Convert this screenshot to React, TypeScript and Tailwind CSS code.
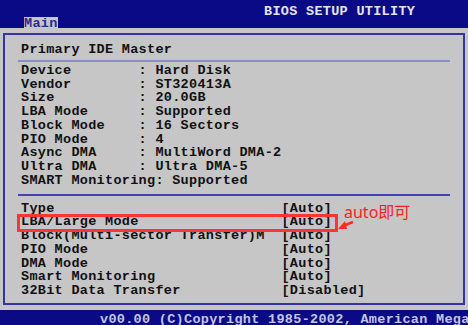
const infoRows: [string, string][] = [
  ["Device", "Hard Disk"],
  ["Vendor", "ST320413A"],
  ["Size", "20.0GB"],
  ["LBA Mode", "Supported"],
  ["Block Mode", "16 Sectors"],
  ["PIO Mode", "4"],
  ["Async DMA", "MultiWord DMA-2"],
  ["Ultra DMA", "Ultra DMA-5"],
];

const options: [string, string][] = [
  ["Type", "[Auto]"],
  ["LBA/Large Mode", "[Auto]"],
  ["Block(Multi-sector Transfer)M", "[Auto]"],
  ["PIO Mode", "[Auto]"],
  ["DMA Mode", "[Auto]"],
  ["Smart Monitoring", "[Auto]"],
  ["32Bit Data Transfer", "[Disabled]"],
];

const mono =
  "font-['Liberation_Mono',monospace] font-bold text-[13.5px] tracking-[0.3px] leading-[13.75px]";

export default function App() {
  return (
    <div className="w-[468px] h-[325px] overflow-hidden bg-[#c6c6c6] flex flex-col">
      {/* Header */}
      <div className="flex h-[28px] shrink-0 bg-[#0a0a86]">
        <div className="self-end ml-[24px] h-[11px] w-[34px] bg-[#c6c6c6]">
          <p className={`${mono} leading-[14px] text-[#2a2a9a] whitespace-pre`}>Main</p>
        </div>
        <p className={`${mono} leading-[14px] ml-[206px] mt-[5px] text-[#e4e4f4] whitespace-pre`}>
          BIOS SETUP UTILITY
        </p>
      </div>

      {/* Panel */}
      <div className="ml-[3px] mt-[5px] w-[462px] h-[272px] shrink-0 border-2 border-[#3434a4] pt-[8px] text-[#111111]">
        <div className="ml-[13px] w-[432px]">
          <p className={`${mono} pl-[3px] whitespace-pre`}>Primary IDE Master</p>
          <div className="mt-[3px] h-[2px] bg-[#8c8cc8]" />
          <div className="mt-[2px] pl-[3px] flex flex-col">
            {infoRows.map(([k, v]) => (
              <p key={k} className={`${mono} whitespace-pre`}>
                {k.padEnd(14, " ") + ": " + v}
              </p>
            ))}
            <p className={`${mono} whitespace-pre`}>SMART Monitoring: Supported</p>
          </div>
          <div className="mt-[6px] h-[2px] bg-[#4444b0]" />
          <div className="relative mt-[6px] pl-[3px] flex flex-col">
            {options.map(([k, v]) => (
              <p key={k} className={`${mono} whitespace-pre`}>
                {k.padEnd(31, " ") + v}
              </p>
            ))}
            <div className="absolute left-[-1px] top-[12px] w-[321px] h-[18px] border-[3px] border-[#ff3434]" />
            <svg className="absolute left-[318px] top-[15px]" width="20" height="14" viewBox="0 0 20 14">
              <line x1="17" y1="5" x2="7" y2="9" stroke="#ff2a2a" strokeWidth="2.5" />
              <polygon points="2,12 9,4 11,12" fill="#ff2a2a" />
            </svg>
            <p className="absolute left-[326px] top-[0px] font-['Noto_Sans','Noto_Sans_CJK_SC',sans-serif] text-[16px] leading-[20px] text-[#ff2020] whitespace-nowrap">
              auto即可
            </p>
          </div>
        </div>
      </div>

      {/* Footer */}
      <div className="mt-[5px] flex-1 bg-[#0a0a86] overflow-hidden pt-[3px] pl-[100px]">
        <p className={`${mono} leading-[14px] text-[#c4c4e6] whitespace-pre`}>
          v00.00 (C)Copyright 1985-2002, American Megatrends, Inc.
        </p>
      </div>
    </div>
  );
}
